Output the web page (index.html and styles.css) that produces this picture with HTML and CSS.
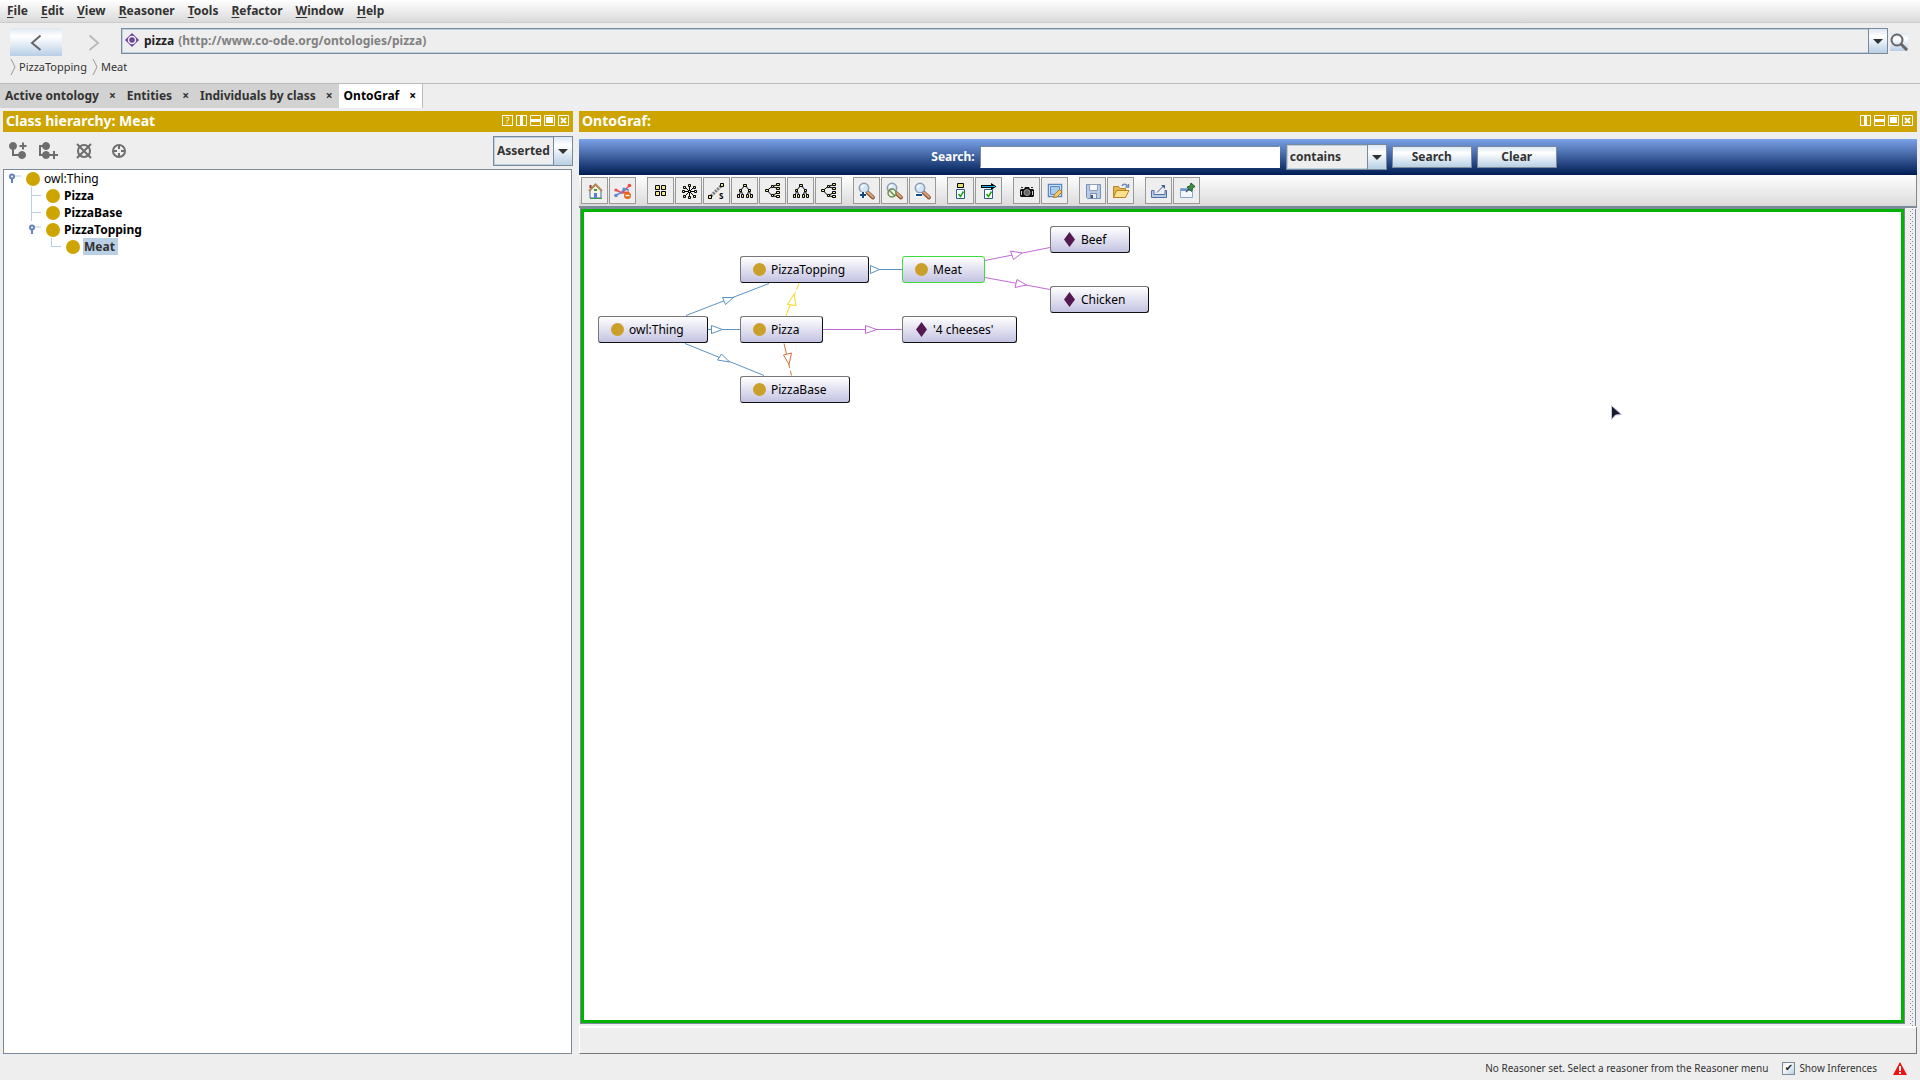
FILE: index.html
```html
<!DOCTYPE html>
<html lang="en">
<head>
<meta charset="utf-8">
<title>pizza</title>
<link rel="stylesheet" href="styles.css">
</head>
<body>
<svg class="defs" aria-hidden="true">
  <symbol id="lens" viewBox="1 1 25 25">
    <path d="M14 15l6 5.500" stroke="#8a5a3a" stroke-width="4" stroke-linecap="round"/>
    <path d="M15 15.500l5 4.500" stroke="#dca27a" stroke-width="2" stroke-linecap="round"/>
    <circle cx="11" cy="11" r="4.700" fill="#d5e6f8" stroke="#8c9cb4" stroke-width="1.500"/>
    <path d="M8.500 11a3 3 0 0 1 3-2.500" fill="none" stroke="#fff" stroke-width="1.500"/>
  </symbol>
  <symbol id="tree-down" viewBox="1 1 25 25">
    <path d="M14 8l-4 5-2 6M14 8l4 5 2 6M10 13l2 6M18 13l-2 6" stroke="#000" fill="none"/>
    <g fill="#eeea80" stroke="#000"><path d="M12.500 7.500h3v2h-3zM8.500 12.500h2v2h-2zM17.500 12.500h2v2h-2zM6.500 17.500h2v3h-2zM10.500 17.500h2v3h-2zM15.500 17.500h2v3h-2zM19.500 17.500h2v3h-2z"/></g>
  </symbol>
  <symbol id="tree-right" viewBox="1 1 25 25">
    <path d="M8 13.500l5-4 6-2M8 13.500l5 5 6 1.500M13 9.500l6 2M13 18.500l6-3" stroke="#000" fill="none"/>
    <g fill="#eeea80" stroke="#000"><path d="M6.500 12.500h3v2h-3zM12.500 8.500h2v2h-2zM12.500 17.500h2v2h-2zM17.500 6.500h3v2h-3zM17.500 10.500h3v2h-3zM17.500 14.500h3v2h-3zM17.500 18.500h3v2h-3z"/></g>
  </symbol>
  <symbol id="check-box" viewBox="1 1 25 25">
    <path d="M9.500 12.500h8v9h-8z" fill="#fff" stroke="#2d5c8c"/>
    <path d="M11.500 17l2 2.500 3-5" fill="none" stroke="#18a018" stroke-width="1.500"/>
  </symbol>
  <symbol id="w-split-v" viewBox="0 0 11 11"><path d="M.5.5h10v10H.5z" fill="none" stroke="#fff"/><path d="M4 0h3v11H4z" fill="#fff"/></symbol>
  <symbol id="w-split-h" viewBox="0 0 11 11"><path d="M.5.5h10v10H.5z" fill="none" stroke="#fff"/><path d="M0 4h11v3H0z" fill="#fff"/></symbol>
  <symbol id="w-float" viewBox="0 0 11 11"><path d="M.5.5h10v10H.5z" fill="none" stroke="#fff"/><path d="M2 2h7v6H2z" fill="#fff"/></symbol>
  <symbol id="w-close" viewBox="0 0 11 11"><path d="M.5.5h10v10H.5z" fill="none" stroke="#fff"/><path d="M3 3l5 5M8 3l-5 5" stroke="#fff" stroke-width="2"/></symbol>
  <symbol id="handle" viewBox="0 0 12 12"><path d="M5 3h7" stroke="#b8cfe5"/><path d="M3 5v5" stroke="#6382bf" stroke-width="2"/><circle cx="3" cy="3.500" r="2" fill="#fff" stroke="#6382bf" stroke-width="2"/></symbol>
</svg>

<nav class="menubar" aria-label="Main menu">
  <button><u>F</u>ile</button><button><u>E</u>dit</button><button><u>V</u>iew</button><button><u>R</u>easoner</button><button><u>T</u>ools</button><button><u>R</u>efactor</button><button><u>W</u>indow</button><button><u>H</u>elp</button>
</nav>

<header class="location">
  <button class="nav-btn nav-back" aria-label="Back"><svg width="52" height="28"><path d="M30.500 7.500l-8.500 7.500 8.500 7" fill="none" stroke="#666" stroke-width="2"/></svg></button>
  <button class="nav-btn" aria-label="Forward" disabled><svg width="52" height="28"><path d="M27.500 7.500l8.500 7.500-8.500 7" fill="none" stroke="#bbb" stroke-width="2"/></svg></button>
  <div class="combo url">
    <svg width="14" height="14" viewBox="0 0 14 14"><path d="M7 0l7 7-7 7-7-7z" fill="#6a44a0"/><circle cx="7" cy="7" r="3.500" fill="#6a44a0" stroke="#eee" stroke-width="1.500"/></svg>
    <label for="ontology">pizza</label>
    <select id="ontology"><option>(http://www.co-ode.org/ontologies/pizza)</option></select>
  </div>
  <button class="find" aria-label="Find"><svg width="18" height="18"><circle cx="7" cy="7" r="5.500" fill="none" stroke="#666" stroke-width="2"/><path d="M11 11l6 6" stroke="#666" stroke-width="3"/></svg></button>
</header>

<nav class="crumbs" aria-label="Selection path">
  <svg width="6" height="16"><path d="M1 0l4 8-4 8" fill="none" stroke="#999"/></svg><a href="#">PizzaTopping</a>
  <svg width="6" height="16"><path d="M1 0l4 8-4 8" fill="none" stroke="#999"/></svg><a href="#">Meat</a>
</nav>

<nav class="tabs" aria-label="Tabs">
  <div class="tab"><button>Active ontology</button><button class="x" aria-label="Close Active ontology">×</button></div>
  <div class="tab"><button>Entities</button><button class="x" aria-label="Close Entities">×</button></div>
  <div class="tab"><button>Individuals by class</button><button class="x" aria-label="Close Individuals by class">×</button></div>
  <div class="tab active"><button>OntoGraf</button><button class="x" aria-label="Close OntoGraf">×</button></div>
</nav>

<main class="workspace">
  <section class="view">
    <div class="view-head">
      <h2>Class hierarchy: Meat</h2>
      <button class="help" aria-label="Help">?</button>
      <button aria-label="Split vertically"><svg><use href="#w-split-v"/></svg></button>
      <button aria-label="Split horizontally"><svg><use href="#w-split-h"/></svg></button>
      <button aria-label="Float"><svg><use href="#w-float"/></svg></button>
      <button aria-label="Close"><svg><use href="#w-close"/></svg></button>
    </div>
    <div class="tree-tools">
      <button aria-label="Add subclass"><svg width="20" height="20" fill="#6e6e6e" stroke="#6e6e6e"><circle cx="5" cy="5" r="3.500"/><circle cx="14" cy="14" r="3.500"/><path d="M5 6v8h8M11.500 5h7M15 1.500v7" fill="none" stroke-width="2"/></svg></button>
      <button aria-label="Add sibling class"><svg width="20" height="20" fill="#6e6e6e" stroke="#6e6e6e"><circle cx="8" cy="5" r="3.500"/><circle cx="8" cy="14" r="3.500"/><path d="M7 5H2v9h5M12 14h8M16 10v8" fill="none" stroke-width="2"/></svg></button>
      <button class="spaced" aria-label="Delete class"><svg width="18" height="18" fill="none" stroke="#6e6e6e" stroke-width="2"><circle cx="9" cy="9" r="6"/><path d="M2 2l14 14M16 2L2 16"/></svg></button>
      <button class="spaced" aria-label="Locate class"><svg width="18" height="18" fill="none" stroke="#6e6e6e" stroke-width="2"><circle cx="9" cy="9" r="6"/><path d="M9 3v4M9 11v4M3 9h4M11 9h4"/></svg></button>
      <div class="combo mode"><select aria-label="Hierarchy mode"><option>Asserted</option></select></div>
    </div>
    <ul class="tree">
      <li>
        <div class="row"><svg class="knob"><use href="#handle"/></svg><i class="dot"></i><span>owl:Thing</span></div>
        <ul>
          <li><div class="row"><i class="arm"></i><i class="dot"></i><b>Pizza</b></div></li>
          <li><div class="row"><i class="arm"></i><i class="dot"></i><b>PizzaBase</b></div></li>
          <li><div class="row"><svg class="knob"><use href="#handle"/></svg><i class="dot"></i><b>PizzaTopping</b></div>
            <ul><li><div class="row"><i class="arm last"></i><i class="dot"></i><b class="selected">Meat</b></div></li></ul>
          </li>
        </ul>
      </li>
    </ul>
  </section>

  <section class="view">
    <div class="view-head">
      <h2>OntoGraf:</h2>
      <button aria-label="Split vertically"><svg><use href="#w-split-v"/></svg></button>
      <button aria-label="Split horizontally"><svg><use href="#w-split-h"/></svg></button>
      <button aria-label="Float"><svg><use href="#w-float"/></svg></button>
      <button aria-label="Close"><svg><use href="#w-close"/></svg></button>
    </div>
    <form class="search">
      <label for="q">Search:</label>
      <input id="q" type="text">
      <div class="combo match"><select aria-label="Match type"><option>contains</option></select></div>
      <button type="button">Search</button>
      <button type="button">Clear</button>
    </form>
    <div class="toolbar">
      <div class="group">
        <button aria-label="Home"><svg viewBox="1 1 25 25"><path d="M9 13v8h11v-8l-5.500-5z" fill="#f6f3e6" stroke="#4a6aa8"/><path d="M8 14l6.500-6.500L21 14" fill="none" stroke="#b08850" stroke-width="2"/><path d="M9.500 8v3" stroke="#a33" stroke-width="2"/><path d="M13 16h3v5h-3z" fill="#5b7fd0"/><path d="M13 12h3v2h-3z" fill="#3c9a50"/><path d="M9 21.500h12" stroke="#3c9a50"/></svg></button>
        <button aria-label="Clear graph"><svg viewBox="1 1 25 25"><path d="M7 13l6 3 7-7M13 16l7-1" stroke="#f04848" stroke-width="1.500" fill="none"/><path d="M7 18l5-2 3-4 5 1" stroke="#5a8ad8" stroke-width="1.500" fill="none"/><g fill="#f04848"><circle cx="7" cy="13" r="1.600"/><circle cx="20.500" cy="8.500" r="1.800"/></g><g fill="#5a8ad8"><circle cx="7" cy="18.500" r="1.800"/><circle cx="15" cy="12" r="1.600"/></g><circle cx="18.500" cy="18.500" r="3.500" fill="#e06818"/><path d="M16.500 18.500h4" stroke="#fff" stroke-width="1.500"/></svg></button>
      </div>
      <div class="group">
        <button aria-label="Grid layout"><svg viewBox="1 1 25 25"><path d="M8.500 8.500h4v4h-4zM14.500 8.500h4v4h-4zM8.500 14.500h4v4h-4zM14.500 14.500h4v4h-4z" fill="#eeea80" stroke="#000"/></svg></button>
        <button aria-label="Radial layout"><svg viewBox="1 1 25 25"><path d="M14.500 8v13M8 14.500h13M10 10l9 9M19 10l-9 9" stroke="#000"/><path d="M13.500 13.500h2v2h-2zM13.500 7.500h2v2h-2zM13.500 19.500h2v2h-2zM7.500 13.500h2v2h-2zM19.500 13.500h2v2h-2zM8.500 9.500h2v2h-2zM18.500 9.500h2v2h-2zM8.500 18.500h2v2h-2zM18.500 18.500h2v2h-2z" fill="#eeea80" stroke="#000"/></svg></button>
        <button aria-label="Spring layout"><svg viewBox="1 1 25 25"><path d="M8 19L19 8" stroke="#777" stroke-width="3" stroke-dasharray="2 1"/><path d="M5.500 18.500h3v3h-3zM17.500 6.500h3v3h-3z" fill="#eeea80" stroke="#000"/><text class="icon-letter" x="16" y="22">S</text></svg></button>
        <button aria-label="Vertical tree layout"><svg><use href="#tree-down"/></svg></button>
        <button aria-label="Horizontal tree layout"><svg><use href="#tree-right"/></svg></button>
        <button aria-label="Vertical directed layout"><svg><use href="#tree-down"/></svg></button>
        <button aria-label="Horizontal directed layout"><svg><use href="#tree-right"/></svg></button>
      </div>
      <div class="group">
        <button aria-label="Zoom in"><svg viewBox="1 1 25 25"><use href="#lens" x="1" y="1" width="25" height="25"/><path d="M7 18h6M10 15v6" stroke="#fff" stroke-width="4"/><path d="M7 18h6M10 15v6" stroke="#104a80" stroke-width="2"/></svg></button>
        <button aria-label="No zoom"><svg viewBox="1 1 25 25"><use href="#lens" x="1" y="1" width="25" height="25"/><circle cx="11" cy="16" r="4" fill="#eeeeee" stroke="#6a8f48" stroke-width="1.500"/><path d="M8 13l6 6" stroke="#6a8f48" stroke-width="1.500"/></svg></button>
        <button aria-label="Zoom out"><svg viewBox="1 1 25 25"><use href="#lens" x="1" y="1" width="25" height="25"/><path d="M6 18h7" stroke="#fff" stroke-width="4"/><path d="M7 18h6" stroke="#104a80" stroke-width="2"/></svg></button>
      </div>
      <div class="group">
        <button aria-label="Node types"><svg viewBox="1 1 25 25"><use href="#check-box" x="1" y="1" width="25" height="25"/><path d="M10.500 6.500h6v4h-6z" fill="#e8e060" stroke="#000"/></svg></button>
        <button aria-label="Arc types"><svg viewBox="1 1 25 25"><use href="#check-box" x="1" y="1" width="25" height="25"/><path d="M6 8h10V6l5.500 3.500L16 13v-2H6z" fill="#000"/><path d="M7 9.500h13" stroke="#10b8ff"/></svg></button>
      </div>
      <div class="group">
        <button aria-label="Export image"><svg viewBox="1 1 25 25"><path d="M8 12h3l1-2h4l1 2h3l1 1v6l-1 1H8l-1-1v-6z" fill="#111"/><circle cx="14" cy="15.500" r="3" fill="#666" stroke="#999"/><path d="M8.500 14v4M19.500 14v4" stroke="#ccc"/><path d="M8 10.500h2M18 10.500h2" stroke="#333"/></svg></button>
        <button aria-label="Edit style"><svg viewBox="1 1 25 25"><path d="M7.500 7.500h13v12h-13z" fill="#fff" stroke="#5a88c8" stroke-width="1.500"/><path d="M9.500 9.500h9v8h-9z" fill="#a8ccee" stroke="#5a88c8"/><path d="M12.500 20.500l1-3 5-5 2.500 2.500-5 5z" fill="#f4c868" stroke="#b07820"/></svg></button>
      </div>
      <div class="group">
        <button aria-label="Save"><svg viewBox="1 1 25 25"><path d="M7.500 7.500h14v14h-13l-1-1z" fill="#b8cce8" stroke="#7890b8"/><path d="M10.500 7.500h8v6h-8z" fill="#f8f8f8" stroke="#90a0b8"/><path d="M11.500 16.500h6v5h-6z" fill="#eee" stroke="#7890b8"/><path d="M13 18v3" stroke="#456" stroke-width="2"/></svg></button>
        <button aria-label="Open"><svg viewBox="1 1 25 25"><path d="M6.500 20.500v-11h5l1.500 2h5.500v9z" fill="#e8b850" stroke="#b88420"/><path d="M6.500 20.500l3-7H22l-3.500 7z" fill="#fce090" stroke="#b88420"/><path d="M15 9c1-2 4-2.500 5 0m1.500-2v3h-3" fill="none" stroke="#6888b8" stroke-width="1.500"/></svg></button>
      </div>
      <div class="group">
        <button aria-label="Export"><svg viewBox="1 1 25 25"><path d="M6.500 13.500h2.500v4h11v-4h1.500v7h-15z" fill="#b8cce8" stroke="#5070a8"/><path d="M12 15.500l7-7" stroke="#406098"/><path d="M16 8h4v4z" fill="#406098"/></svg></button>
        <button aria-label="Pin"><svg viewBox="1 1 25 25"><path d="M7.500 11.500h12v9h-12z" fill="#f4f8fc" stroke="#88a8d0"/><path d="M8 13h9" stroke="#6898d8" stroke-width="2"/><path d="M13 15l3-3" stroke="#555" stroke-width="1.500"/><path d="M14 10l3-1 1-3 4 3.500-2.500 1.500-1 3.500z" fill="#3a9040" stroke="#206028"/></svg></button>
      </div>
    </div>
    <div class="graph-area">
      <div class="canvas">
        <svg class="edges" width="600" height="200">
          <g stroke="#5b93c2" fill="#fff">
            <path d="M102 103.500L185 71.500M124 117.500h32M101 131.500l79 32M286 57.500h32"/>
            <path d="M138.500 85.500l3 7 8-7zM127.500 113.500v8l11-4zM137.500 142l-4 6 12 2zM286.500 53.500v8l9-4z"/>
          </g>
          <g stroke="#f5d90f" fill="#fff"><path d="M202 103.500l13-32" stroke-dasharray="11 3"/><path d="M203.500 92.500l8.500 1-2-11.500z"/></g>
          <g stroke="#d8703a" fill="#fff"><path d="M200 131.500l7.500 32" stroke-dasharray="11 3"/><path d="M199.500 143l8-2-2.500 11.500z"/></g>
          <g stroke="#c26ad6" fill="#fff">
            <path d="M239 117.500h79M401 48.500l65-13M401 65.500l65 12"/>
            <path d="M281.500 113.500v8l11-4zM426.500 39l3 8.500 8.500-6.500zM433 67.500l-2 8 11.500-2.500z"/>
          </g>
        </svg>
        <div class="node n-thing"><i class="dot"></i>owl:Thing</div>
        <div class="node n-topping"><i class="dot"></i>PizzaTopping</div>
        <div class="node n-pizza"><i class="dot"></i>Pizza</div>
        <div class="node n-base"><i class="dot"></i>PizzaBase</div>
        <div class="node n-meat"><i class="dot"></i>Meat</div>
        <div class="node n-cheeses"><i class="gem"></i>'4 cheeses'</div>
        <div class="node n-beef"><i class="gem"></i>Beef</div>
        <div class="node n-chicken"><i class="gem"></i>Chicken</div>
        <svg class="pointer" width="14" height="18"><path d="M1.500 1.500v14l4-4.500 6-.5z" fill="#1a1a2e" stroke="#c8c8dc"/></svg>
      </div>
      <div class="splitter"></div>
    </div>
    <div class="info"></div>
  </section>
</main>

<footer class="status">
  <span>No Reasoner set. Select a reasoner from the Reasoner menu</span>
  <label><input type="checkbox" checked>Show Inferences</label>
  <svg width="14" height="13"><path d="M7 0l7 13H0z" fill="#f01010"/><path d="M7 4v5M7 10v2" stroke="#fff" stroke-width="2"/></svg>
</footer>
</body>
</html>
```
FILE: styles.css
```css
* { box-sizing: border-box; }
body {
  margin: 0;
  min-height: 100vh;
  display: flex;
  flex-direction: column;
  background: #eeeeee;
  color: #333333;
  font: 12px/16px "Noto Sans", sans-serif;
}
button, select, input { font: inherit; color: inherit; margin: 0; border-radius: 0; }
button { padding: 0; border: 0; background: none; }
svg { display: block; flex: none; }
ul { list-style: none; margin: 0; padding: 0; }
i { flex: none; }
a { color: inherit; text-decoration: none; }
.defs { position: absolute; width: 0; height: 0; }

.menubar {
  display: flex;
  gap: 13px;
  height: 23px;
  padding: 0 7px;
  border-bottom: 1px solid #cccccc;
  background: linear-gradient(#ffffff, #dadada);
  font-weight: bold;
}
.menubar u { text-underline-offset: 2px; }

.location { display: flex; align-items: flex-start; padding: 5px 12px 0 10px; }
.nav-back, .find { background: linear-gradient(#dde8f3, #ffffff 30%, #b8cfe5); }
.nav-btn { height: 28px; }
.find { margin: 5px 0 0 2px; }

.combo {
  position: relative;
  display: flex;
  align-items: center;
  border: 1px solid #7a8a99;
  box-shadow: inset 0 0 0 1px #b8cfe5;
  font-weight: bold;
  background: #eeeeee;
}
.combo select {
  appearance: none;
  flex: 1;
  align-self: stretch;
  min-width: 0;
  border: 0;
  outline: 0;
  padding: 0 20px 0 3px;
  background:
    linear-gradient(#7a8a99, #7a8a99) right 18px top / 1px 100% no-repeat,
    linear-gradient(#dde8f3, #ffffff 30%, #b8cfe5) right top / 18px 100% no-repeat;
}
.combo::after {
  content: "";
  position: absolute;
  right: 4px;
  top: calc(50% - 2px);
  border: 5px solid transparent;
  border-top-color: #333333;
  border-bottom: 0;
  pointer-events: none;
}
.url { flex: 1; height: 26px; margin-left: 7px; padding-left: 3px; }
.url label { margin-left: 5px; color: #222222; }
.url select { color: #808080; padding-left: 4px; }
.url svg { margin-bottom: 2px; }

.crumbs { display: flex; align-items: center; gap: 3px; height: 27px; padding: 0 10px 5px; font-size: 11px; }
.crumbs a { margin-right: 2px; }

.tabs { display: flex; border-top: 1px solid #bbbbbb; font-weight: bold; height: 25px; }
.tab { display: flex; gap: 10px; padding: 0 6px 0 5px; background: #d2d2d2; }
.tab.active { background: #ffffff; color: #000000; border-right: 1px solid #bbbbbb; }

.workspace { flex: 1; display: grid; grid-template-columns: 570px 1fr; gap: 6px; padding: 3px 3px 0; }
.view { display: flex; flex-direction: column; min-width: 0; }
.view-head { display: flex; align-items: center; gap: 3px; height: 21px; padding: 0 4px 2px 3px; background: #cea500; color: #ffffff; }
.view-head h2 { flex: 1; margin: 0; font-size: 14px; line-height: 18px; }
.view-head button, .view-head svg { width: 11px; height: 11px; }
.view-head .help { border: 1px solid #ffffff; font-size: 9px; line-height: 9px; }

.tree-tools { display: flex; align-items: center; gap: 10px; height: 37px; padding-left: 5px; }
.spaced { margin-left: 7px; }
.mode { width: 80px; height: 30px; margin: 1px 0 0 auto; }
.tree { flex: 1; border: 1px solid #7a8a99; background: #ffffff; color: #000000; margin-right: 1px; }
.tree ul { margin-left: 20px; }
.row { display: flex; align-items: center; height: 17px; padding-left: 5px; }
.knob { width: 12px; height: 12px; margin-right: 5px; }
.arm { width: 10px; height: 17px; margin: 0 5px 0 2px; border-left: 1px solid #b8cfe5; background: linear-gradient(#b8cfe5, #b8cfe5) 0 8px / 100% 1px no-repeat; }
.arm.last { height: 9px; align-self: flex-start; }
.dot { width: 14px; height: 14px; border-radius: 50%; background: #cea500; }
.row .dot { margin-right: 3px; }
.row span, .row b { padding: 0 1px; line-height: 17px; }
.row .selected { padding-right: 3px; background: #b8cfe5; color: #333333; }

.search { display: flex; align-items: center; justify-content: center; gap: 5px; height: 36px; margin-top: 7px; padding-right: 8px; background: linear-gradient(#7ba2e7, #001d55); font-weight: bold; }
.search label { color: #ffffff; }
.search input { width: 300px; height: 22px; border: 1px solid #7a8a99; border-right-color: #ffffff; border-bottom-color: #ffffff; background: #ffffff; margin-right: 1px; }
.search button { width: 80px; height: 22px; border: 1px solid #7a8a99; background: linear-gradient(#dde8f3, #ffffff 30%, #b8cfe5); }
.match { width: 101px; height: 26px; }

.toolbar { display: flex; gap: 11px; height: 31px; padding: 2px; background: linear-gradient(#ffffff, #dadada); border-right: 1px solid #888888; }
.group { display: flex; gap: 1px; }
.group button { width: 27px; height: 27px; border: 1px solid #999999; background: #eeeeee; }
.group svg { width: 25px; height: 25px; fill: none; }
.icon-letter { font-size: 8px; font-weight: bold; fill: #000000; }

.graph-area { flex: 1; display: grid; grid-template-columns: 1fr 12px; border-top: 2px solid #7a8a99; }
.canvas { position: relative; background: #ffffff; border: 3px solid #00b300; outline: 1px solid #7a8a99; margin: 1px 1px 3px 2px; color: #000000; }
.edges { position: absolute; left: 0; top: 0; }
.node {
  position: absolute;
  display: flex;
  align-items: center;
  height: 27px;
  padding-left: 12px;
  border: 1px solid #111111;
  border-top-color: #777777;
  border-left-color: #777777;
  border-radius: 3px;
  background: linear-gradient(#ffffff, #c4c3e2);
}
.node .dot { width: 13px; height: 13px; margin-right: 5px; background: #cba02a; }
.gem { width: 11px; height: 15px; margin: 0 6px 0 1px; background: #541a50; clip-path: polygon(50% 0, 100% 50%, 50% 100%, 0 50%); }
.n-thing { left: 14px; top: 104px; width: 110px; }
.n-topping { left: 156px; top: 44px; width: 129px; }
.n-pizza { left: 156px; top: 104px; width: 83px; }
.n-base { left: 156px; top: 164px; width: 110px; }
.n-meat { left: 318px; top: 44px; width: 83px; border-color: #3fdc3f; }
.n-cheeses { left: 318px; top: 104px; width: 115px; }
.n-beef { left: 466px; top: 14px; width: 80px; }
.n-chicken { left: 466px; top: 74px; width: 99px; }
.pointer { position: absolute; left: 1026px; top: 192px; }
.splitter {
  margin: 1px 1px 0 2px;
  border-right: 1px solid #7a8a99;
  background:
    linear-gradient(#7a8a99 1px, transparent 1px) 3px 2px / 1px 4px repeat-y,
    linear-gradient(#7a8a99 1px, transparent 1px) 5px 4px / 1px 4px repeat-y;
}
.info { height: 28px; border: 1px solid #ffffff; border-top-width: 2px; border-right-color: #777777; border-bottom-color: #777777; }

.status { display: flex; align-items: center; justify-content: flex-end; gap: 14px; height: 26px; padding: 2px 13px 0 0; font-size: 10px; }
.status label { display: flex; align-items: center; gap: 4px; }
.status input { appearance: none; width: 13px; height: 13px; border: 1px solid #7a8a99; background: linear-gradient(135deg, #dde8f3, #ffffff 30%, #b8cfe5); display: grid; place-items: center; }
.status input::before { content: "✔"; color: #222222; font: 10px/10px "DejaVu Sans", sans-serif; }
.status svg { margin-left: 2px; }
```
